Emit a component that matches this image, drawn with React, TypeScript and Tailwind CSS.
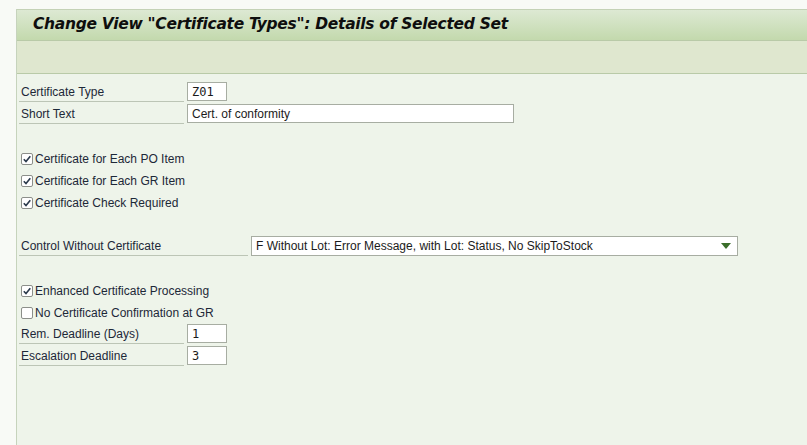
import React from "react";

const font = { fontFamily: '"Liberation Sans", Arial, sans-serif' };

function Label({ text, w = "w-[165px]" }: { text: string; w?: string }) {
  return (
    <div className={`${w} h-[20px] border-b border-[#bcc5b6] pl-[2px] flex items-center text-[12px] text-[#1d2838]`}>
      {text}
    </div>
  );
}

function Input({ value, w, mono }: { value: string; w: string; mono?: boolean }) {
  return (
    <div
      className={`${w} h-[19px] bg-white border border-[#a7ada2] flex items-center pl-[4px] pt-[1px] text-[12px] text-[#1b1b1b]`}
      style={mono ? { fontFamily: '"DejaVu Sans Mono", "Liberation Mono", monospace', fontSize: 12 } : undefined}
    >
      {value}
    </div>
  );
}

function Check({ text, checked }: { text: string; checked: boolean }) {
  return (
    <div className="h-[22px] flex items-center pl-[4px] text-[12px] text-[#1d2838]">
      <div className="w-[12px] h-[12px] bg-white border border-[#8c8f8a] rounded-[2px] flex items-center justify-center mr-[2px]">
        {checked && (
          <svg width="10" height="10" viewBox="0 0 10 10">
            <path d="M1.8 5.2 L4 7.6 L8.3 2.2" stroke="#2b3a4c" strokeWidth="1.6" fill="none" />
          </svg>
        )}
      </div>
      <span>{text}</span>
    </div>
  );
}

function Row({ children }: { children: React.ReactNode }) {
  return <div className="h-[22px] flex items-start pl-[2px] gap-[3px]">{children}</div>;
}

export default function App() {
  return (
    <div className="w-[807px] h-[445px] bg-[#f8faf6] flex flex-col overflow-hidden" style={font}>
      <div className="h-[9px] shrink-0" />
      <div className="flex-1 flex pl-[16px]">
        <div className="flex-1 flex flex-col bg-[#eef4ea] border-l border-[#c6d3bc]">
          <div className="h-[31px] shrink-0 border-t border-[#c4d2b6] bg-gradient-to-b from-[#dde9d3] to-[#c3d9ad] flex items-center pl-[16px]">
            <span
              className="text-[#0e0e0e] font-bold italic text-[15.5px]"
              style={{ fontFamily: '"DejaVu Sans", Verdana, sans-serif', letterSpacing: "-0.3px" }}
            >
              Change View "Certificate Types": Details of Selected Set
            </span>
          </div>
          <div className="h-[34px] shrink-0 bg-[#dfe7cf] border-t border-[#b9caa8] border-b border-[#b5c1a6]" />
          <div className="flex flex-col pt-[8px]">
            <Row>
              <Label text="Certificate Type" />
              <Input value="Z01" w="w-[40px]" mono />
            </Row>
            <Row>
              <Label text="Short Text" />
              <Input value="Cert. of conformity" w="w-[327px]" />
            </Row>
            <div className="h-[22px]" />
            <Check text="Certificate for Each PO Item" checked />
            <Check text="Certificate for Each GR Item" checked />
            <Check text="Certificate Check Required" checked />
            <div className="h-[22px]" />
            <Row>
              <Label text="Control Without Certificate" w="w-[229px]" />
              <div className="w-[487px] h-[20px] bg-white border border-[#a7ada2] flex items-center justify-between pl-[4px] pr-[6px] text-[12px] text-[#1b1b1b]">
                <span>F Without Lot: Error Message, with Lot: Status, No SkipToStock</span>
                <svg width="10" height="6" viewBox="0 0 10 6">
                  <path d="M0 0 H10 L5 6 Z" fill="#3b6e2b" />
                </svg>
              </div>
            </Row>
            <div className="h-[22px]" />
            <Check text="Enhanced Certificate Processing" checked />
            <Check text="No Certificate Confirmation at GR" checked={false} />
            <Row>
              <Label text="Rem. Deadline (Days)" />
              <Input value="1" w="w-[40px]" mono />
            </Row>
            <Row>
              <Label text="Escalation Deadline" />
              <Input value="3" w="w-[40px]" mono />
            </Row>
          </div>
        </div>
      </div>
    </div>
  );
}
